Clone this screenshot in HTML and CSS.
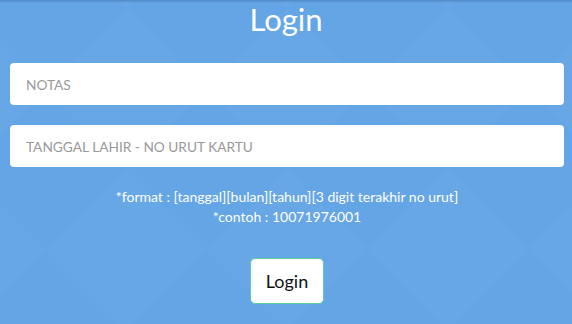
FILE: index.html
```html
<!DOCTYPE html>
<html lang="en">

<head>
    <meta charset="UTF-8">
    <meta name="viewport" content="width=device-width, initial-scale=1.0">
    <title>Login</title>
    <link rel="stylesheet" href="styles.css">
</head>

<body>
    <main class="page">
        <h1 class="title">Login</h1>

        <form class="login-form">
            <input class="field" type="text" placeholder="NOTAS">
            <input class="field" type="text" placeholder="TANGGAL LAHIR - NO URUT KARTU">

            <div class="hint">
                <p>*format : [tanggal][bulan][tahun][3 digit terakhir no urut]</p>
                <p>*contoh : 10071976001</p>
            </div>

            <button class="btn-login" type="button">Login</button>
        </form>
    </main>
</body>

</html>
```

FILE: styles.css
```css
* {
    margin: 0;
    padding: 0;
    box-sizing: border-box;
    font-family: Lato, 'Open Sans', sans-serif;
}

:root {
    --bg-color: #64a5e5;
}

html,
body {
    height: 100%;
}

body {
    background-color: var(--bg-color);
    background-image:
        linear-gradient(to bottom, rgba(40, 80, 140, 0.35), rgba(40, 80, 140, 0) 3px),
        linear-gradient(45deg, rgba(255, 255, 255, 0.025) 25%, transparent 25%, transparent 75%, rgba(255, 255, 255, 0.025) 75%),
        linear-gradient(-45deg, rgba(255, 255, 255, 0.025) 25%, transparent 25%, transparent 75%, rgba(255, 255, 255, 0.025) 75%);
    background-size: 100% 100%, 161px 161px, 161px 161px;
    background-position: 0 0, -35px -72px, -35px -72px;
    background-repeat: no-repeat, repeat, repeat;
    overflow: hidden;
}

.page {
    display: flex;
    flex-direction: column;
    align-items: center;
}

.title {
    color: white;
    font-size: 31px;
    font-weight: 400;
    line-height: 38px;
    margin-top: 0;
}

.login-form {
    width: 100%;
    display: flex;
    flex-direction: column;
    align-items: center;
    padding: 25px 8px 0 10px;
}

.field {
    width: 100%;
    height: 42px;
    border: none;
    border-radius: 4px;
    background-color: white;
    padding: 0 16px;
    font-size: 13.7px;
    color: #555;
    margin-bottom: 20px;
    outline: none;
}

.field::placeholder {
    color: #999;
}

.hint {
    color: white;
    font-size: 14px;
    line-height: 20px;
    text-align: center;
    margin-top: 0;
}

.btn-login {
    margin-top: 31px;
    width: 74px;
    height: 46px;
    background-color: white;
    border: 1px solid #5ccf9a;
    border-radius: 5px;
    font-size: 18px;
    color: #111;
    cursor: pointer;
}
```
